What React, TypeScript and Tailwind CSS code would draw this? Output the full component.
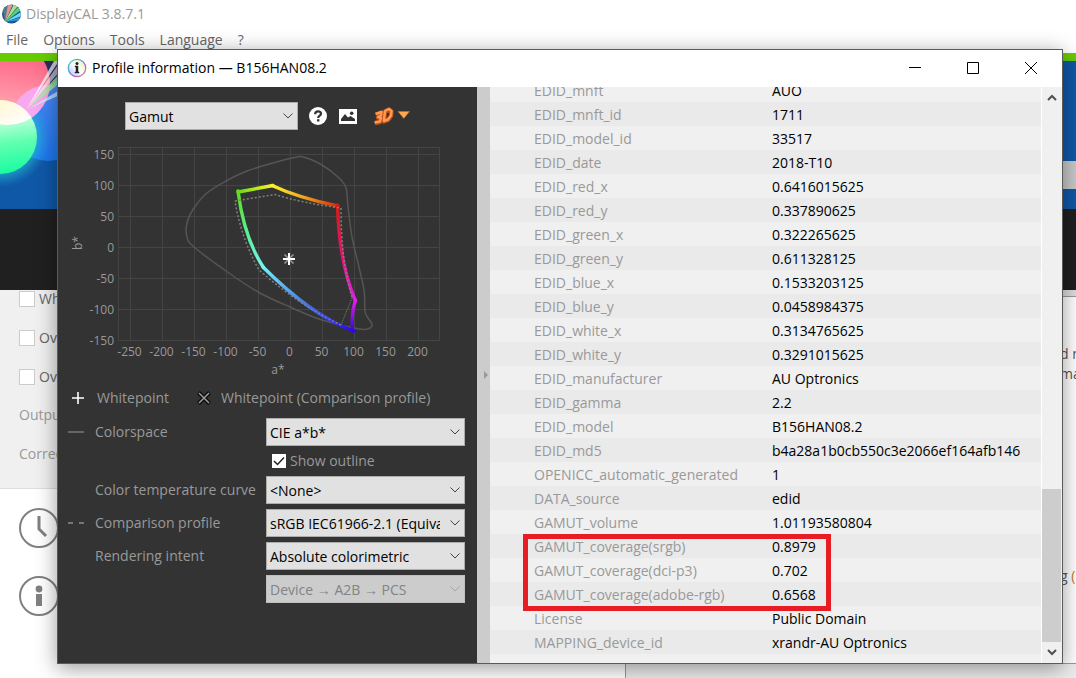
import { useState } from 'react';
import type { ReactNode } from 'react';

const PROFILE_ROWS: [string, string][] = [
  ['EDID_mnft', 'AUO'],
  ['EDID_mnft_id', '1711'],
  ['EDID_model_id', '33517'],
  ['EDID_date', '2018-T10'],
  ['EDID_red_x', '0.6416015625'],
  ['EDID_red_y', '0.337890625'],
  ['EDID_green_x', '0.322265625'],
  ['EDID_green_y', '0.611328125'],
  ['EDID_blue_x', '0.1533203125'],
  ['EDID_blue_y', '0.0458984375'],
  ['EDID_white_x', '0.3134765625'],
  ['EDID_white_y', '0.3291015625'],
  ['EDID_manufacturer', 'AU Optronics'],
  ['EDID_gamma', '2.2'],
  ['EDID_model', 'B156HAN08.2'],
  ['EDID_md5', 'b4a28a1b0cb550c3e2066ef164afb146'],
  ['OPENICC_automatic_generated', '1'],
  ['DATA_source', 'edid'],
  ['GAMUT_volume', '1.01193580804'],
  ['GAMUT_coverage(srgb)', '0.8979'],
  ['GAMUT_coverage(dci-p3)', '0.702'],
  ['GAMUT_coverage(adobe-rgb)', '0.6568'],
  ['License', 'Public Domain'],
  ['MAPPING_device_id', 'xrandr-AU Optronics'],
];

const X_TICKS = [-250, -200, -150, -100, -50, 0, 50, 100, 150, 200];
const Y_TICKS = [150, 100, 50, 0, -50, -100, -150];

const OUTLINE: [number, number][] = [
  [303, 157], [322, 165], [339, 178], [346, 188], [348, 207], [352, 237], [358, 263], [364, 290],
  [365, 311], [368, 318], [372, 324], [370, 328], [359, 329], [322, 320], [290, 307], [258, 292],
  [226, 271], [194, 247], [187, 237], [187, 223], [194, 208], [207, 193], [226, 181], [247, 171],
  [273, 163], [292, 158],
];

/* closed Catmull-Rom spline through the points */
function smoothPath(points: [number, number][]) {
  const n = points.length;
  let d = `M${points[0][0]} ${points[0][1]}`;
  for (let i = 0; i < n; i++) {
    const p0 = points[(i + n - 1) % n];
    const p1 = points[i];
    const p2 = points[(i + 1) % n];
    const p3 = points[(i + 2) % n];
    d += `C${p1[0] + (p2[0] - p0[0]) / 6} ${p1[1] + (p2[1] - p0[1]) / 6} ${p2[0] - (p3[0] - p1[0]) / 6} ${p2[1] - (p3[1] - p1[1]) / 6} ${p2[0]} ${p2[1]}`;
  }
  return d + 'Z';
}

const EDGES = [
  { id: 'gy', d: 'M238 192L273 185.5', from: [238, 192], to: [273, 185], stops: ['#62dc18', '#b4e81c', '#fff02c'] },
  { id: 'yr', d: 'M272 185.5Q299 198 338 206', from: [272, 185], to: [338, 206], stops: ['#fff02c', '#f0a41e', '#d82808'] },
  { id: 'rm', d: 'M337.5 205Q339 262 355.5 301', from: [338, 206], to: [355, 301], stops: ['#d81c14', '#e0146c', '#e41cf0'] },
  { id: 'mb', d: 'M355.5 300Q351 314 352.5 331', from: [355, 301], to: [353, 331], stops: ['#e41cf0', '#8a14d8', '#3208d8'] },
  { id: 'bc', d: 'M354 331Q312 316 263 267', from: [353, 331], to: [263, 267], stops: ['#2c08e0', '#4478e8', '#74f0f4'] },
  { id: 'cg', d: 'M263.5 267.5Q244 238 238 191', from: [263, 267], to: [238, 191], stops: ['#74f4ec', '#58f08c', '#62dc18'] },
];

function GamutChart() {
  const x = (v: number) => 290.5 + Math.round(v * 0.642);
  const y = (v: number) => 247.5 - Math.round(v * 0.622);

  return (
    <svg viewBox="60 140 400 240" className="block h-[240px] w-[400px] text-[12px]" role="img" aria-label="Gamut">
      <defs>
        {EDGES.map((e) => (
          <linearGradient key={e.id} id={e.id} gradientUnits="userSpaceOnUse" x1={e.from[0]} y1={e.from[1]} x2={e.to[0]} y2={e.to[1]}>
            <stop offset="0" stopColor={e.stops[0]} />
            <stop offset="0.5" stopColor={e.stops[1]} />
            <stop offset="1" stopColor={e.stops[2]} />
          </linearGradient>
        ))}
      </defs>
      <g stroke="#444" fill="none">
        <rect x="118.5" y="147.5" width="321" height="193" />
        {X_TICKS.map((t) => <path key={t} d={`M${x(t)} 148V340`} />)}
        {Y_TICKS.map((t) => <path key={t} d={`M119 ${y(t)}H439`} />)}
      </g>
      <g fill="#999">
        {X_TICKS.map((t) => <text key={t} x={x(t) - 1} y="356" textAnchor="middle">{t}</text>)}
        {Y_TICKS.map((t) => <text key={t} x="114" y={y(t) + 4} textAnchor="end">{t}</text>)}
        <text x="278" y="374" textAnchor="middle">a*</text>
        <text transform="translate(82 243) rotate(-90)" textAnchor="middle">b*</text>
      </g>
      <path d={smoothPath(OUTLINE)} fill="none" stroke="#555" strokeWidth="1.5" />
      <g fill="none" strokeWidth="3.4" strokeLinecap="round">
        {EDGES.map((e) => <path key={e.id} d={e.d} stroke={`url(#${e.id})`} />)}
      </g>
      <g fill="none" stroke="#808080" strokeWidth="1.5" strokeDasharray="2 2">
        <path d="M235 201L275 194.5Q302 203 341 208Q341 262 352 297" />
        <path d="M352 298L341 325" strokeWidth="1" strokeDasharray="1 1" />
        <path d="M341 325Q300 306 259 270Q241 238 235 201" />
      </g>
      <path d="M284.5 254.5L293.5 263.5M293.5 254.5L284.5 263.5" stroke="#999" strokeWidth="1.5" />
      <path d="M289 253V265M283 259H295" stroke="#fff" strokeWidth="2" />
    </svg>
  );
}

function Chevron({ className }: { className: string }) {
  return (
    <svg viewBox="0 0 10 6" className={className} fill="none" stroke="currentColor">
      <path d="M0.5 0.5L5 5L9.5 0.5" />
    </svg>
  );
}

function ComboBox({ id, value, label, disabled }: { id: string; value: string; label?: string; disabled?: boolean }) {
  return (
    <div className="relative h-7 w-full">
      <select
        id={id}
        aria-label={label}
        disabled={disabled}
        className="h-7 w-full appearance-none overflow-hidden border border-[#adadad] bg-[#e1e1e1] pt-px pr-6 pl-[3px] text-sm leading-6 text-black disabled:border-[#bfbfbf] disabled:bg-[#ccc] disabled:text-[#838383] disabled:opacity-100"
      >
        <option>{value}</option>
      </select>
      <Chevron
        className={
          disabled
            ? 'pointer-events-none absolute top-[11px] right-[5px] h-[6px] w-[10px] text-[#a5a5a5]'
            : 'pointer-events-none absolute top-[11px] right-[5px] h-[6px] w-[10px] text-[#444]'
        }
      />
    </div>
  );
}

function SettingRow({ mark, label, htmlFor, children }: { mark?: ReactNode; label?: string; htmlFor?: string; children: ReactNode }) {
  return (
    <div className="grid grid-cols-[27px_171px_1fr] items-center">
      <span>{mark}</span>
      {label ? <label htmlFor={htmlFor} className="whitespace-nowrap">{label}</label> : <span />}
      {children}
    </div>
  );
}

function GamutPanel() {
  const [outline, setOutline] = useState(true);

  return (
    <div className="w-[419px] shrink-0 bg-[#333] pt-[15px] pr-3 text-sm text-[#999]">
      <div className="flex h-7 items-center pl-[67px]">
        <div className="w-[173px]">
          <ComboBox id="graph" value="Gamut" label="Graph type" />
        </div>
        <button type="button" aria-label="Help" className="ml-[11px]">
          <svg viewBox="0 0 18 18" className="block size-[18px]" fill="none">
            <circle cx="9" cy="9" r="9" fill="#fff" />
            <path d="M6.1 7.2C6.1 5.2 7.3 4.3 9 4.3S12 5.2 12 6.8C12 8.7 9.2 8.7 9.2 10.9" stroke="#333" strokeWidth="2.2" />
            <path d="M8 12.2h2.4v2.3H8z" fill="#333" />
          </svg>
        </button>
        <button type="button" aria-label="Save image" className="ml-3">
          <svg viewBox="0 0 18 16" className="block h-4 w-[18px]">
            <path d="M0 1H18V16H0Z" fill="#fff" />
            <path d="M2 13V11L6 6L9 9.5L11.5 8L16 11V13Z" fill="#333" />
            <circle cx="12.7" cy="5.2" r="1.8" fill="#333" />
          </svg>
        </button>
        <button type="button" aria-label="View in 3D" className="ml-4">
          <svg viewBox="0 0 38 20" className="block h-5 w-[38px]" fill="none" strokeLinejoin="round">
            <g stroke="#b8501c" strokeWidth="4.5">
              <path d="M3 8.5L8.5 6.5L8 10L5 11.5L8 12.5L7 16L2 17" />
              <path d="M12 5.5L10.8 15.5L15 14L18 10L18.5 5.5L16 3.5Z" />
            </g>
            <g stroke="#ff9a50" strokeWidth="2.4">
              <path d="M2.5 8L8.5 6L8 9.5L5 11L8 12L7 15.5L1.5 16.5" />
              <path d="M12 5L10.8 15L15 13.5L18 9.5L18.5 5L16 3Z" />
            </g>
            <path d="M25 5.5H36.5L30.8 12.5Z" fill="#ffa850" stroke="#b8682c" strokeWidth="0.6" />
          </svg>
        </button>
      </div>
      <div className="mt-[10px] pl-[2px]">
        <GamutChart />
      </div>
      <div className="mt-2 flex h-5 items-center pl-[14px] whitespace-nowrap">
        <svg viewBox="0 0 12 12" className="size-3" stroke="#fff" strokeWidth="1.6">
          <path d="M6 0V12M0 6H12" />
        </svg>
        <span className="ml-[13px] w-[100px]">Whitepoint</span>
        <svg viewBox="0 0 14 14" className="size-[14px]">
          <path d="M1.5 1.5L12.5 12.5M12.5 1.5L1.5 12.5" stroke="#0a0a0a" strokeWidth="4" />
          <path d="M2 2L12 12M12 2L2 12" stroke="#999" strokeWidth="1.6" />
        </svg>
        <span className="ml-[10px]">Whitepoint (Comparison profile)</span>
      </div>
      <div className="mt-[10px] flex flex-col gap-[5px] pl-[10px]">
        <SettingRow label="Colorspace" htmlFor="colorspace" mark={<span className="block h-[2px] w-4 bg-[#666]" />}>
          <ComboBox id="colorspace" value="CIE a*b*" />
        </SettingRow>
        <SettingRow>
          <label className="flex h-5 items-center gap-1 pl-[6px]">
            <span className="relative block size-[14px]">
              <input
                type="checkbox"
                checked={outline}
                onChange={(e) => setOutline(e.target.checked)}
                className="block size-[14px] appearance-none bg-white"
              />
              {outline && (
                <svg viewBox="0 0 14 14" className="pointer-events-none absolute inset-0 size-[14px]" fill="none" stroke="#222" strokeWidth="1.5">
                  <path d="M2 7L5.5 10.5L12 3.5" />
                </svg>
              )}
            </span>
            Show outline
          </label>
        </SettingRow>
        <SettingRow label="Color temperature curve" htmlFor="curve">
          <ComboBox id="curve" value="<None>" />
        </SettingRow>
        <SettingRow
          label="Comparison profile"
          htmlFor="comparison"
          mark={
            <span className="flex gap-[6px]">
              <span className="h-[2px] w-[5px] bg-[#777]" />
              <span className="h-[2px] w-[5px] bg-[#777]" />
            </span>
          }
        >
          <ComboBox id="comparison" value="sRGB IEC61966-2.1 (Equivalent)" />
        </SettingRow>
        <SettingRow label="Rendering intent" htmlFor="intent">
          <ComboBox id="intent" value="Absolute colorimetric" />
        </SettingRow>
        <SettingRow>
          <ComboBox id="direction" value="Device → A2B → PCS" label="Direction" disabled />
        </SettingRow>
      </div>
    </div>
  );
}

function ProfileTable() {
  return (
    <div className="relative flex min-w-0 flex-1 flex-col justify-end overflow-hidden bg-[#f0f0f0] pb-[9px]">
      <table className="w-full shrink-0 table-fixed border-collapse text-left text-sm">
        <tbody>
          {PROFILE_ROWS.map(([name, value]) => (
            <tr key={name} className="h-6 odd:bg-[#f0f0f0] even:bg-[#eaeaea]">
              <th scope="row" className="w-[282px] p-0 pt-[2px] pl-11 leading-[22px] font-normal whitespace-nowrap text-[#999]">{name}</th>
              <td className="p-0 pt-[2px] leading-[22px] whitespace-nowrap text-black">{value}</td>
            </tr>
          ))}
        </tbody>
      </table>
      {/* marker around the gamut coverage rows */}
      <div className="absolute bottom-[52px] left-[33px] h-[77px] w-[308px] border-[5px] border-[#e81c24]" />
    </div>
  );
}

function ScrollBar() {
  return (
    <div className="flex w-[21px] shrink-0 flex-col border-l border-white bg-[#f0f0f0] pr-px text-[#505050]">
      <button type="button" aria-label="Scroll up" className="flex h-[21px] items-center justify-center">
        <svg viewBox="0 0 10 7" className="h-[7px] w-[10px]" fill="none" stroke="currentColor" strokeWidth="2">
          <path d="M1 6L5 2L9 6" />
        </svg>
      </button>
      <div className="flex-1" />
      <div className="h-[153px] bg-[#cdcdcd]" />
      <button type="button" aria-label="Scroll down" className="flex h-[21px] items-center justify-center">
        <svg viewBox="0 0 10 7" className="h-[7px] w-[10px]" fill="none" stroke="currentColor" strokeWidth="2">
          <path d="M1 1L5 5L9 1" />
        </svg>
      </button>
    </div>
  );
}

function ProfileDialog() {
  return (
    <section className="absolute top-[49px] right-[13px] bottom-[14px] left-[57px] flex flex-col border border-[#5a5a5a] bg-white shadow-[0_4px_20px_rgba(0,0,0,0.4)]">
      <header className="flex h-[37px] shrink-0 items-center pr-[2px] pb-px pl-[9px]">
        <svg viewBox="0 0 20 20" className="size-5">
          <defs>
            <linearGradient id="ringA" x1="0" y1="0" x2="1" y2="1">
              <stop offset="0" stopColor="#5bd98a" />
              <stop offset="0.35" stopColor="#4a9be8" />
              <stop offset="0.6" stopColor="#a45be0" />
              <stop offset="1" stopColor="#f08a5a" />
            </linearGradient>
            <linearGradient id="ringB" x1="0" y1="1" x2="1" y2="0">
              <stop offset="0" stopColor="#a8b8ff" />
              <stop offset="0.5" stopColor="#fff" />
              <stop offset="1" stopColor="#d8f5a0" />
            </linearGradient>
          </defs>
          <circle cx="10" cy="10" r="8.7" fill="url(#ringB)" stroke="url(#ringA)" strokeWidth="1.3" />
          <circle cx="10" cy="5.4" r="1.5" fill="#222" />
          <path d="M8 8H11V14H12V15H8V14H9V9H8Z" fill="#222" stroke="#222" strokeWidth="0.5" />
        </svg>
        <h1 className="ml-[5px] flex-1 text-sm whitespace-nowrap text-black">Profile information — B156HAN08.2</h1>
        <button type="button" aria-label="Minimize" className="flex h-full w-[58px] items-center justify-center">
          <svg viewBox="0 0 12 12" className="size-3" stroke="#000"><path d="M0 5.5H12" /></svg>
        </button>
        <button type="button" aria-label="Maximize" className="flex h-full w-[58px] items-center justify-center">
          <svg viewBox="0 0 12 12" className="size-3" fill="none" stroke="#000"><path d="M0.5 0.5H11.5V11.5H0.5Z" /></svg>
        </button>
        <button type="button" aria-label="Close" className="flex h-full w-[58px] items-center justify-center">
          <svg viewBox="0 0 12 12" className="size-3" stroke="#000"><path d="M0 0L12 12M12 0L0 12" /></svg>
        </button>
      </header>
      <div className="flex min-h-0 flex-1">
        <GamutPanel />
        <div className="flex w-[13px] shrink-0 items-center justify-center bg-[#ccc]">
          <svg viewBox="0 0 4 8" className="ml-1 h-2 w-1" fill="#999"><path d="M0 0L4 4L0 8Z" /></svg>
        </div>
        <ProfileTable />
        <ScrollBar />
      </div>
    </section>
  );
}

function BannerArt() {
  return (
    <svg viewBox="0 61 72 148" className="block h-[148px] w-[72px]">
      <defs>
        <linearGradient id="red" gradientUnits="userSpaceOnUse" x1="20" y1="61" x2="10" y2="125">
          <stop offset="0" stopColor="#ff6c8c" />
          <stop offset="0.6" stopColor="#ff98a8" />
          <stop offset="1" stopColor="#ffc8d8" />
        </linearGradient>
        <linearGradient id="green" gradientUnits="userSpaceOnUse" x1="6" y1="124" x2="12" y2="172">
          <stop offset="0" stopColor="#b0ffd4" />
          <stop offset="0.4" stopColor="#60ffb0" />
          <stop offset="1" stopColor="#1cfca0" />
        </linearGradient>
        <linearGradient id="cream" gradientUnits="userSpaceOnUse" x1="0" y1="99" x2="16" y2="126">
          <stop offset="0" stopColor="#fff8d0" />
          <stop offset="1" stopColor="#fffcfc" />
        </linearGradient>
        <radialGradient id="glow" gradientUnits="userSpaceOnUse" cx="0" cy="137" r="50">
          <stop offset="0.7" stopColor="#20c0d0" stopOpacity="0.7" />
          <stop offset="1" stopColor="#20a0d0" stopOpacity="0" />
        </radialGradient>
        <linearGradient id="blue" x1="0" y1="0" x2="0" y2="1">
          <stop offset="0" stopColor="#4c88f8" />
          <stop offset="1" stopColor="#1c78f0" />
        </linearGradient>
        <clipPath id="redClip"><circle cx="8" cy="83" r="42" /></clipPath>
        <clipPath id="greenClip"><circle cx="0" cy="137" r="37" /></clipPath>
      </defs>
      <path d="M0 61H72V209H0Z" fill="#0f58a8" />
      <path d="M36 61H72V76L50 84Z" fill="#2c2c68" />
      <circle cx="48" cy="123" r="38" fill="url(#blue)" />
      <circle cx="0" cy="137" r="50" fill="url(#glow)" />
      <circle cx="8" cy="83" r="42" fill="url(#red)" />
      <circle cx="48" cy="123" r="38" fill="#f8a8ec" clipPath="url(#redClip)" />
      <circle cx="0" cy="137" r="37" fill="url(#green)" />
      <circle cx="8" cy="83" r="42" fill="url(#cream)" clipPath="url(#greenClip)" />
      <path d="M26 110L54 61H59Z" fill="#fff" opacity="0.75" />
      <path d="M27 109L60 73V83Z" fill="#a8f0a0" opacity="0.8" />
      <path d="M28 109L60 90V95Z" fill="#d0e8ff" opacity="0.8" />
      <path d="M28 108L60 62V71Z" fill="#fff" opacity="0.6" />
    </svg>
  );
}

function BackCheck({ text }: { text: string }) {
  return (
    <label className="flex h-[39px] items-center gap-1">
      <input type="checkbox" className="size-4 appearance-none border border-[#ccc] bg-white" />
      {text}
    </label>
  );
}

function MainWindow() {
  return (
    <div className="flex min-h-screen flex-col text-[#666]">
      <div className="flex h-[27px] items-center gap-1 pl-[2px] text-sm text-[#999]">
        <svg viewBox="0 0 20 20" className="size-5">
          <defs><clipPath id="logo"><circle cx="9.5" cy="10" r="9.5" /></clipPath></defs>
          <g clipPath="url(#logo)">
            <path d="M0 0H20V20H0Z" fill="#1c5488" />
            <path d="M3 18L0 0H7Z" fill="#4c8088" />
            <path d="M3 18L6 0H11Z" fill="#f0908c" />
            <path d="M3 18L12 0L16 2Z" fill="#a8e08c" />
            <path d="M3 18L16 3L19 6Z" fill="#58d078" />
            <path d="M3 18L19 8L20 12Z" fill="#70d8f0" />
            <path d="M3 18L20 13V16Z" fill="#2c9ce8" />
          </g>
        </svg>
        DisplayCAL 3.8.7.1
      </div>
      <nav className="flex h-[26px] items-center gap-[15px] pl-[6px] text-sm">
        <button type="button">File</button>
        <button type="button">Options</button>
        <button type="button">Tools</button>
        <button type="button">Language</button>
        <button type="button">?</button>
      </nav>
      <div className="h-2 bg-[#66cc00]" />
      <div className="flex h-[148px] items-start justify-between bg-[#0f58a8]">
        <BannerArt />
        <div className="mt-[100px] h-7 w-20 bg-[#c8c8c8]" />
      </div>
      <div className="h-[81px] bg-[#202020]" />
      <div className="h-[199px] overflow-hidden border-b border-[#ddd] bg-[#f0f0f0] pl-[19px] text-sm">
        <div className="-mt-[11px]">
          <BackCheck text="Wh" />
          <BackCheck text="Ov" />
          <BackCheck text="Ov" />
        </div>
        <p className="h-[39px] pt-[9px] leading-5 text-[#999]">Outpu</p>
        <p className="h-[39px] pt-[9px] leading-5 text-[#999]">Correc</p>
      </div>
      <div className="flex flex-col gap-7 pt-[19px] pl-[19px]">
        <svg viewBox="0 0 40 40" className="size-10" fill="none" stroke="#808080" strokeWidth="2">
          <circle cx="20" cy="20" r="19" />
          <path d="M20 8V21L27 28" strokeWidth="3" />
        </svg>
        <svg viewBox="0 0 40 40" className="size-10" fill="none" stroke="#808080" strokeWidth="2">
          <circle cx="20" cy="20" r="19" />
          <circle cx="20" cy="13" r="3.4" fill="#808080" stroke="none" />
          <path d="M17 18H23V30H17Z" fill="#808080" stroke="none" />
        </svg>
      </div>
    </div>
  );
}

function LogWindow() {
  return (
    <div className="absolute top-[290px] right-0 bottom-0 left-[625px] flex flex-col border-l border-[#999] bg-[#ebebeb] text-sm text-[#555]">
      <div className="h-[6px] bg-[#ddd]" />
      <div className="flex flex-1 flex-col items-end overflow-hidden border-y border-[#999] bg-white pt-[47px]">
        <p className="w-4 leading-5 whitespace-nowrap">d n</p>
        <p className="w-4 leading-5 whitespace-nowrap">ma</p>
        <p className="mt-[182px] w-4 leading-5 whitespace-nowrap">g <span className="text-[#c87828]">(</span></p>
      </div>
      <div className="h-[14px]" />
    </div>
  );
}

export default function App() {
  return (
    <div className="relative min-h-screen overflow-hidden bg-white font-['Open_Sans','Noto_Sans',sans-serif]">
      <MainWindow />
      <LogWindow />
      <ProfileDialog />
    </div>
  );
}
